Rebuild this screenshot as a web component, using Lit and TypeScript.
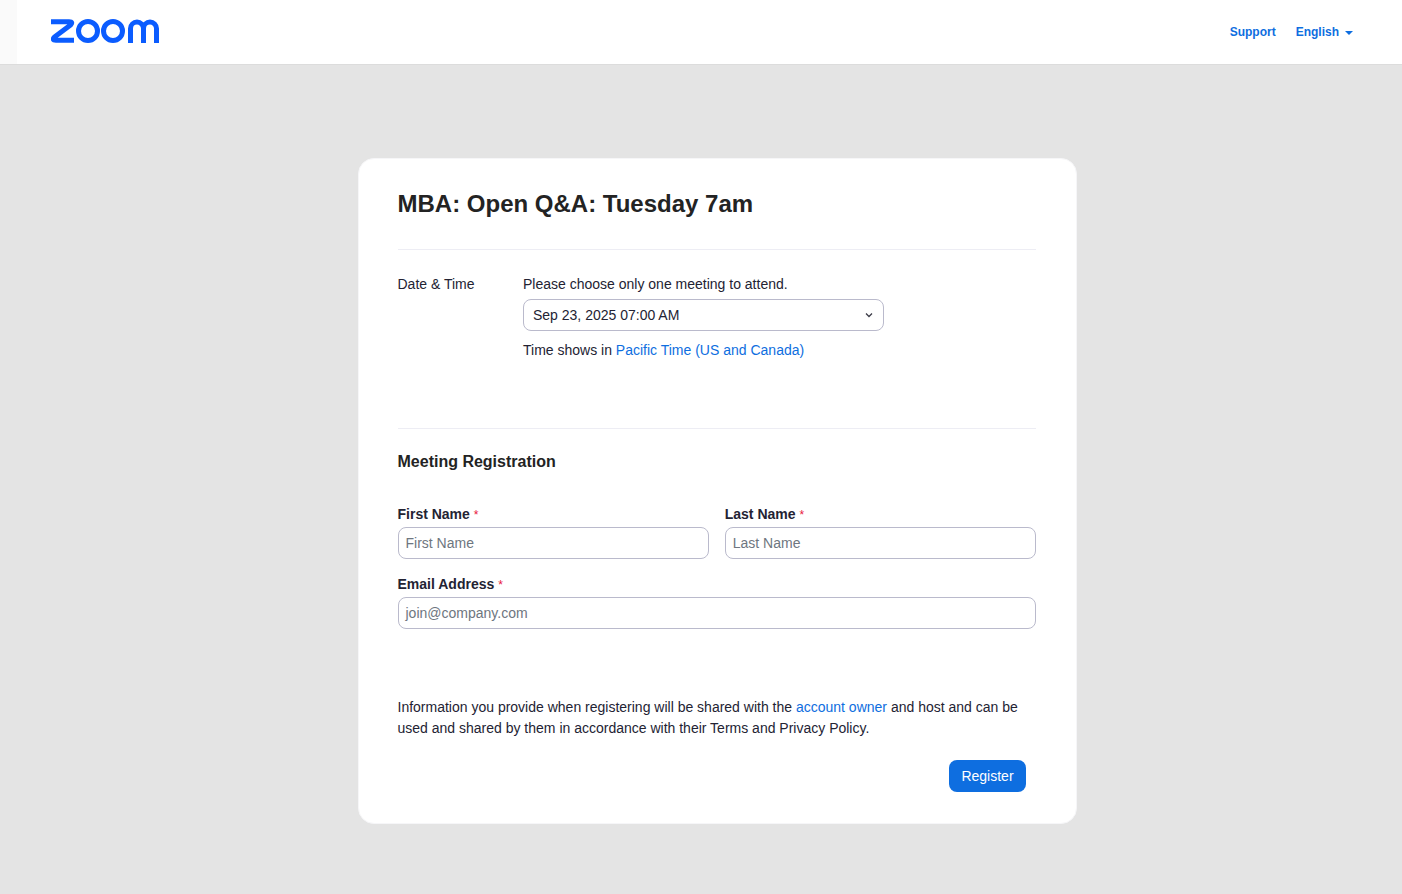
import { LitElement, html, css } from "lit";
import { customElement } from "lit/decorators.js";

@customElement("app-root")
export class AppRoot extends LitElement {
  static styles = css`
    :host { display: block; min-height: 894px; background: #e4e4e4; font-family: "Liberation Sans", Arial, sans-serif; color: #232333; font-size: 14px; }
    * { box-sizing: border-box; }
    header { height: 65px; background: #fff; border-bottom: 1px solid #dcdcdc; display: flex; align-items: center; justify-content: space-between; padding: 0 49px 0 51px; position: relative; }
    .strip { position: absolute; left: 0; top: 0; bottom: 0; width: 17px; background: #fafafa; }
    .logo { display: block; width: 109px; height: 24px; position: relative; margin-bottom: 2px; }
    nav { display: flex; align-items: center; gap: 20px; font-size: 12px; font-weight: 700; color: #0e6ee0; }
    .lang { display: flex; align-items: center; gap: 6px; }
    .caret { width: 0; height: 0; border-left: 4px solid transparent; border-right: 4px solid transparent; border-top: 4px solid #0e6ee0; margin-top: 2px; }
    main { padding-top: 93px; padding-left: 357.5px; }
    .card { width: 719px; height: 666px; background: #fff; border-radius: 16px; border: 1px solid #f6f6f8; padding: 0 39.5px 0 39px; }
    h1 { margin: 0; padding-top: 30px; height: 91px; font-size: 24px; line-height: 29px; font-weight: 700; color: #232323; border-bottom: 1px solid #ededf4; }
    .dt { display: flex; height: 179px; border-bottom: 1px solid #ededf4; padding-top: 26px; }
    .dt-label { width: 125.5px; line-height: 17px; }
    .hint { line-height: 17px; }
    .select { width: 361px; height: 32px; margin-top: 6px; border: 1px solid #babacc; border-radius: 8px; display: flex; align-items: center; justify-content: space-between; padding: 0 8px 0 9px; }
    .tz { margin-top: 11px; line-height: 17px; }
    a { color: #0e6ee0; text-decoration: none; }
    h2 { margin: 23px 0 0; font-size: 16px; line-height: 19px; font-weight: 700; color: #232323; }
    .row { display: flex; gap: 16px; margin-top: 35px; }
    .row.second { margin-top: 17px; }
    .field { flex: 1; }
    label { display: block; font-weight: 700; line-height: 17px; color: #232333; }
    .req { color: #e8173d; font-weight: 400; font-size: 12px; }
    .input { height: 32px; margin-top: 3px; border: 1px solid #babacc; border-radius: 8px; padding: 0 7px; display: flex; align-items: center; color: #6e7680; }
    .info { margin: 68px 0 0; line-height: 21px; color: #232333; }
    .actions { display: flex; justify-content: flex-end; padding-right: 10px; margin-top: 21px; }
    .btn { width: 77px; height: 32px; background: #0e6ee0; color: #fff; border-radius: 8px; display: flex; align-items: center; justify-content: center; }
  `;

  render() {
    return html`
      <header>
        <div class="strip"></div>
        <svg class="logo" viewBox="0 0 109 24" fill="none" stroke="#0b5cff" stroke-width="5">
          <path d="M0 2.8H18Q22.5 2.8 19.5 6L3.5 18Q.5 21.2 5 21.2H23" stroke-linejoin="round"/>
          <circle cx="37" cy="12" r="9.5"/>
          <circle cx="62" cy="12" r="9.5"/>
          <path d="M79.5 24V9.5A6.5 6.5 0 0 1 92.5 9.5V24M92.5 9.5A6.5 6.5 0 0 1 105.5 9.5V24"/>
        </svg>
        <nav>
          <span>Support</span>
          <span class="lang">English <i class="caret"></i></span>
        </nav>
      </header>
      <main>
        <div class="card">
          <h1>MBA: Open Q&amp;A: Tuesday 7am</h1>
          <section class="dt">
            <div class="dt-label">Date &amp; Time</div>
            <div>
              <div class="hint">Please choose only one meeting to attend.</div>
              <div class="select">
                <span>Sep 23, 2025 07:00 AM</span>
                <svg width="12" height="12" viewBox="0 0 12 12" fill="none" stroke="#3c3c48" stroke-width="1.3"><path d="M3 4.5L6 7.5L9 4.5"/></svg>
              </div>
              <div class="tz">Time shows in <a>Pacific Time (US and Canada)</a></div>
            </div>
          </section>
          <h2>Meeting Registration</h2>
          <div class="row">
            <div class="field"><label>First Name <span class="req">*</span></label><div class="input">First Name</div></div>
            <div class="field"><label>Last Name <span class="req">*</span></label><div class="input">Last Name</div></div>
          </div>
          <div class="row second">
            <div class="field"><label>Email Address <span class="req">*</span></label><div class="input">join@company.com</div></div>
          </div>
          <p class="info">Information you provide when registering will be shared with the <a>account owner</a> and host and can be used and shared by them in accordance with their Terms and Privacy Policy.</p>
          <div class="actions"><div class="btn">Register</div></div>
        </div>
      </main>
    `;
  }
}
